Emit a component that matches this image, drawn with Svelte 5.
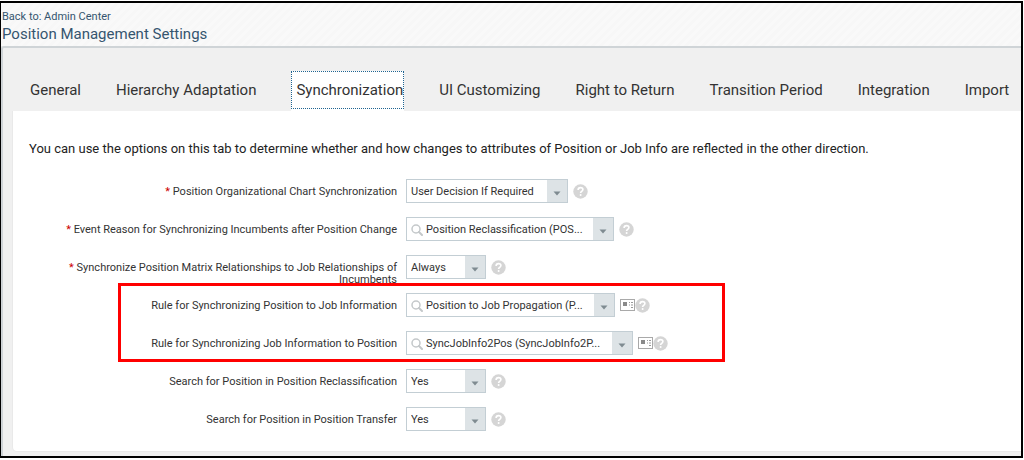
<script>
	const tabs = [
		'General',
		'Hierarchy Adaptation',
		'Synchronization',
		'UI Customizing',
		'Right to Return',
		'Transition Period',
		'Integration',
		'Import'
	];

	let activeTab = $state('Synchronization');

	const groups = [
		{
			id: 'position',
			rows: [
				{
					id: 'org-chart',
					label: 'Position Organizational Chart Synchronization',
					required: true,
					value: 'User Decision If Required',
					options: ['User Decision If Required'],
					width: 162
				},
				{
					id: 'event-reason',
					label: 'Event Reason for Synchronizing Incumbents after Position Change',
					required: true,
					search: true,
					value: 'Position Reclassification (POS...',
					width: 208
				},
				{
					id: 'matrix',
					label: 'Synchronize Position Matrix Relationships to Job Relationships of Incumbents',
					required: true,
					value: 'Always',
					options: ['Always', 'Never'],
					width: 80
				}
			]
		},
		{
			id: 'rules',
			highlighted: true,
			rows: [
				{
					id: 'position-to-job',
					label: 'Rule for Synchronizing Position to Job Information',
					search: true,
					details: true,
					value: 'Position to Job Propagation (P...',
					width: 209
				},
				{
					id: 'job-to-position',
					label: 'Rule for Synchronizing Job Information to Position',
					search: true,
					details: true,
					value: 'SyncJobInfo2Pos (SyncJobInfo2P...',
					width: 227
				}
			]
		},
		{
			id: 'lookup',
			rows: [
				{
					id: 'reclassification',
					label: 'Search for Position in Position Reclassification',
					value: 'Yes',
					options: ['Yes', 'No'],
					width: 80
				},
				{
					id: 'transfer',
					label: 'Search for Position in Position Transfer',
					value: 'Yes',
					options: ['Yes', 'No'],
					width: 80
				}
			]
		}
	];
</script>

{#snippet caret()}
	<svg width="8" height="5" viewBox="0 0 8 5" aria-hidden="true">
		<path d="M0.5 0.5h7L4 4.5z" fill="#7f8b91" />
	</svg>
{/snippet}

<div class="frame">
	<header>
		<a href="#admin">Back to: Admin Center</a>
		<h1>Position Management Settings</h1>
	</header>

	<main>
		<div class="tabs" role="tablist">
			{#each tabs as tab (tab)}
				<button
					class:active={tab === activeTab}
					type="button"
					role="tab"
					aria-selected={tab === activeTab}
					onclick={() => (activeTab = tab)}
				>
					<span>{tab}</span>
				</button>
			{/each}
		</div>

		<section class="panel" role="tabpanel" aria-label={activeTab}>
			<p>
				You can use the options on this tab to determine whether and how changes to attributes of
				Position or Job Info are reflected in the other direction.
			</p>

			<form>
				{#each groups as group (group.id)}
					<div class="group" class:highlighted={group.highlighted}>
						{#each group.rows as row (row.id)}
							<div class="row">
								<label for={row.id}>
									{#if row.required}<b>*</b>{/if}
									{row.label}
								</label>

								<div class="controls">
									<div class="combo" style="width: {row.width}px">
										{#if row.search}
											<svg class="lens" width="12" height="12" viewBox="0 0 12 12" aria-hidden="true">
												<circle cx="5" cy="5" r="4" fill="none" stroke="#c4c8ca" stroke-width="1.5" />
												<path d="M8 8l3 3" stroke="#c4c8ca" stroke-width="2" stroke-linecap="round" />
											</svg>
											<input id={row.id} type="text" value={row.value} />
											<button class="arrow" type="button" aria-label="Open list">
												{@render caret()}
											</button>
										{:else}
											<select id={row.id} value={row.value}>
												{#each row.options as option}
													<option value={option}>{option}</option>
												{/each}
											</select>
											<span class="arrow">{@render caret()}</span>
										{/if}
									</div>

									{#if row.details}
										<button class="icon" type="button" aria-label="Details">
											<svg width="15" height="12" viewBox="0 0 15 12">
												<rect x="0.5" y="0.5" width="14" height="11" fill="#fff" stroke="#a9a9a9" />
												<path d="M3 3h4v4H3z" fill="#8a8a8a" />
												<path d="M9 3.5h1M11 3.5h2M9 6h1M11 6h2M11 8.5h2" stroke="#999" />
											</svg>
										</button>
									{/if}
									<button class="icon help" type="button" aria-label="Help">
										<svg width="15" height="15" viewBox="0 0 15 15">
											<circle cx="7.5" cy="7.5" r="7.2" fill="#d5d5d5" />
											<path
												d="M5.1 5.9C5.1 4.4 6.1 3.6 7.5 3.6s2.4.8 2.4 2c0 1.7-2.3 1.7-2.3 3.3"
												fill="none"
												stroke="#fff"
												stroke-width="1.6"
											/>
											<circle cx="7.6" cy="11.1" r="1" fill="#fff" />
										</svg>
									</button>
								</div>
							</div>
						{/each}
					</div>
				{/each}
			</form>
		</section>
	</main>
</div>

<style>
	:global(body) {
		background: #fff;
	}

	.frame {
		overflow: hidden;
		margin: 1px 1px 2px 0;
		border: 2px solid #000;
		border-left-width: 1px;
		background: #f0f0f0;
		color: #333;
		font-family: Roboto, 'Liberation Sans', sans-serif;
		font-size: 11px;
	}

	button,
	input,
	select {
		margin: 0;
		padding: 0;
		border: 0;
		border-radius: 0;
		background: none;
		color: inherit;
		font: inherit;
	}

	button {
		cursor: pointer;
	}

	header {
		padding: 6px 1px 2px;
		background: repeating-linear-gradient(135deg, #f9f9f9 0 3px, #f7f7f7 3px 6px);
		color: #35556f;
	}

	header a {
		display: block;
		color: inherit;
		line-height: 16px;
		text-decoration: none;
	}

	h1 {
		margin: 0;
		font-size: 15px;
		font-weight: 400;
		line-height: 19px;
	}

	main {
		padding: 0 0 5px 10px;
		border-top: 2px solid #cfd4d7;
		border-left: 2px solid #cfd4d7;
		border-top-left-radius: 3px;
	}

	.tabs {
		display: flex;
		gap: 35px;
		padding: 23px 0 0 17px;
	}

	.tabs button {
		height: 40px;
		padding-bottom: 2px;
		font-size: 15px;
		line-height: 38px;
		white-space: nowrap;
	}

	.tabs .active {
		background: #fff;
	}

	.tabs .active span {
		display: block;
		padding: 0 0 0 4px;
		border: 1px dotted #1f6491;
		line-height: 36px;
	}

	.panel {
		padding: 28px 0 6px 16px;
		border-radius: 0 0 0 4px;
		background: #fff;
		box-shadow: 0 0 0 1px #e9e9e9;
		clip-path: inset(0 0 -1px -1px);
	}

	.panel p {
		margin: 0 0 20px;
		font-size: 13px;
		line-height: 20px;
		color: #222;
	}

	.group {
		position: relative;
	}

	.highlighted::before {
		content: '';
		position: absolute;
		top: -10px;
		bottom: 7px;
		left: 89px;
		width: 607px;
		box-sizing: border-box;
		border: 3px solid #f00;
		pointer-events: none;
	}

	.row {
		display: flex;
		gap: 9px;
		min-height: 38px;
	}

	label {
		flex: 0 0 368px;
		box-sizing: border-box;
		padding: 7px 0 0 20px;
		line-height: 12px;
		text-align: right;
	}

	label b {
		color: #c00;
		font-weight: 400;
	}

	.controls {
		display: flex;
		align-items: center;
		height: 24px;
	}

	.combo {
		display: grid;
		grid-template-columns: 1fr 20px;
		box-sizing: border-box;
		height: 24px;
		margin-right: 5px;
		border: 1px solid #c3ced4;
		background: #fff;
	}

	.combo:has(.lens) {
		grid-template-columns: 19px 1fr 20px;
	}

	.lens {
		align-self: center;
		justify-self: center;
		margin-top: 2px;
	}

	input {
		min-width: 0;
		outline: none;
	}

	select {
		grid-area: 1 / 1 / 2 / 3;
		padding-left: 4px;
		appearance: none;
		outline: none;
	}

	.arrow {
		grid-row: 1;
		grid-column: -2;
		display: grid;
		place-items: center;
		padding-top: 4px;
		background: #dde3e6;
		pointer-events: none;
	}

	button.arrow {
		pointer-events: auto;
	}

	.icon {
		display: grid;
	}
</style>
